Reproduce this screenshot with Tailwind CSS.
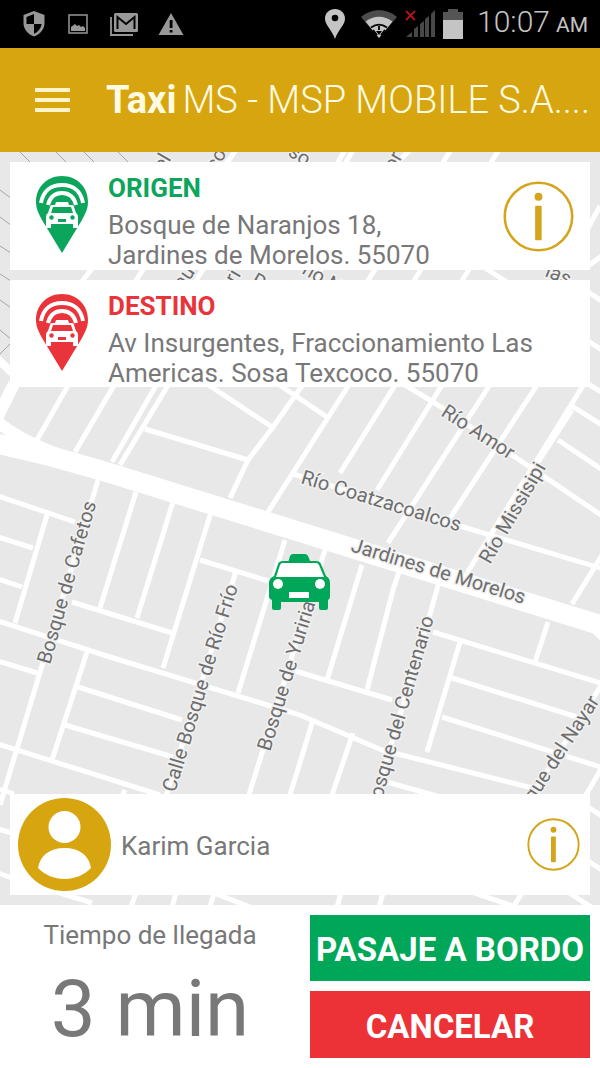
<!DOCTYPE html>
<html lang="es">
<head>
    <meta charset="UTF-8">
    <meta name="viewport" content="width=device-width, initial-scale=1.0">
    <title>Taxi MS | Viaje</title>

    <!-- Tailwind css -->
    <script src="https://cdn.jsdelivr.net/npm/@tailwindcss/browser@4"></script>
</head>
<body class="min-h-screen flex flex-col bg-white font-['Roboto',sans-serif] text-[#787878]">

    <!-- Shared icons -->
    <svg class="hidden">
        <symbol id="pin" viewBox="0 0 52 77">
            <path d="M26 0C11 0 0 11 0 26c0 7 3 12 6 18l20 33 20-33c3-6 6-11 6-18C52 11 41 0 26 0z" fill="currentColor"/>
            <path d="M5 27C7 15 15 9 26 9s19 6 21 18M12 29c2-8 7-12 14-12s12 4 14 12" fill="none" stroke="#fff" stroke-width="4"/>
            <path d="M20 26h12l1 3h3q2 0 2 2l2 6q2 1 2 4v11h-5v-4H15v4h-5V41q0-3 2-4l2-6q0-2 2-2h3z" fill="#fff"/>
            <path d="M17 31h18l2 6H15z" fill="currentColor"/>
            <circle cx="15.500" cy="41.500" r="2.200" fill="currentColor"/>
            <circle cx="36.500" cy="41.500" r="2.200" fill="currentColor"/>
            <path d="M22 43h8v3h-8z" fill="currentColor"/>
        </symbol>
        <symbol id="info" viewBox="0 0 72 72">
            <circle cx="36" cy="36" r="34.2" fill="none" stroke="currentColor" stroke-width="2.6"/>
            <circle cx="36" cy="16" r="4" fill="currentColor"/>
            <rect x="32.6" y="25" width="6.6" height="35" rx="1" fill="currentColor"/>
        </symbol>
    </svg>

    <!-- Status bar -->
    <div class="h-12 shrink-0 bg-black flex items-center justify-between pl-[22px] pr-3 text-[#c4c4c4]">
        <div class="flex items-center gap-5 text-[#989898]">
            <svg class="w-6 h-7" viewBox="0 0 24 28">
                <path d="M12 1l10.500 4v8c0 6-4 11-10.500 13.500C5.500 24 1.500 19 1.500 13V5z" fill="currentColor"/>
                <path d="M12 4v10H4.500V7zM12 14h7.500c-.5 4.500-3.500 8-7.500 9.800z" fill="#000"/>
            </svg>
            <svg class="w-6 h-6" viewBox="0 0 24 24">
                <rect x="3" y="3" width="18" height="18" fill="none" stroke="currentColor" stroke-width="1.500"/>
                <path d="M5 19v-4l4-3 2 2 2-1 2 2 2-1 2 2v3z" fill="currentColor"/>
            </svg>
            <svg class="w-7 h-6" viewBox="0 0 28 24">
                <path d="M1 5v18h22" fill="none" stroke="currentColor" stroke-width="1.800"/>
                <rect x="4" y="1" width="24" height="19" rx="1.500" fill="currentColor"/>
                <path d="M7.500 17V5l8.500 7 8.500-7v12" fill="none" stroke="#000" stroke-width="2"/>
            </svg>
            <svg class="w-[26px] h-6" viewBox="0 0 26 24">
                <path d="M13 1l12.500 22H.5z" fill="currentColor"/>
                <path d="M11.700 8h2.800v8h-2.800zM11.700 18h2.800v2.500h-2.800z" fill="#000"/>
            </svg>
        </div>
        <div class="flex items-center">
            <svg class="w-5 h-8" viewBox="0 0 20 32">
                <path d="M10 1C4.500 1 0 5 0 10.500 0 17 7 22 10 31c3-9 10-14 10-20.500C20 5 15.500 1 10 1z" fill="currentColor"/>
                <circle cx="10" cy="10" r="3.300" fill="#000"/>
            </svg>
            <svg class="w-9 h-7 ml-4" viewBox="0 0 36 28">
                <path d="M0 7c10-9 26-9 36 0L18 28z" fill="#4c4c4c"/>
                <path d="M4.500 11.500c8-6.500 19-6.500 27 0L18 28z" fill="currentColor"/>
                <path d="M10 17.500c5-3.500 11-3.500 16 0M18 16v4M12 20l4 5M24 20l-4 5" fill="none" stroke="#000" stroke-width="1.800"/>
                <path d="M15 21h6l-3 4z" fill="#000"/>
            </svg>
            <svg class="w-[30px] h-7 ml-2" viewBox="0 0 30 28">
                <path d="M1 27l6-5v5zM9 19l4-3v11H9zM15 14l4-3v16h-4zM20 9l4-3v21h-4zM26 4l4-4v27h-4z" fill="#484848"/>
                <path d="M1 1l9 9M10 1L1 10" stroke="#b01414" stroke-width="2"/>
            </svg>
            <svg class="w-5 h-[30px] ml-2" viewBox="0 0 20 30">
                <path d="M5 0h10v3h5v9H0V3h5z" fill="#555"/>
                <path d="M0 11h20v19H0z" fill="currentColor"/>
            </svg>
            <div class="ml-[14px] flex items-baseline gap-[6px] whitespace-nowrap">
                <span class="text-[30px] leading-8 font-light">10:07</span>
                <span class="text-[21px]">AM</span>
            </div>
        </div>
    </div>

    <!-- Header -->
    <header class="h-[104px] shrink-0 bg-[#d7a50f] flex items-center pl-[35px] pr-3">
        <button type="button" aria-label="Menú" class="shrink-0 w-[35px] flex flex-col gap-[6px]">
            <span class="h-1 bg-[#fff3c8]"></span>
            <span class="h-1 bg-[#fff3c8]"></span>
            <span class="h-1 bg-[#fff3c8]"></span>
        </button>
        <h1 class="ml-9 flex items-baseline gap-[6px] text-[38px] text-[#fffbe2] whitespace-nowrap">
            <b>Taxi</b>
            <span class="font-light">MS - MSP MOBILE S.A....</span>
        </h1>
    </header>

    <!-- Map -->
    <main class="relative flex-1 flex flex-col gap-[10px] p-[10px] overflow-hidden">
        <svg class="absolute inset-0 w-full h-full bg-[#e8e8e8]" viewBox="0 152 600 753" preserveAspectRatio="xMidYMid slice" role="img" aria-label="Mapa">
            <!-- Plot boundaries -->
            <g fill="none" stroke="#a5a5a5" stroke-width="1">
                <path d="M20 152l14 14M56 152l14 14M84 152l14 14M118 152l14 14M0 190l12 9M0 217l12 9M0 246l14 9M0 274l14 9M0 300l14 10M0 330l12 10M0 354l12-12"/>
            </g>
            <!-- Avenue -->
            <g fill="none" stroke="#fff">
                <path d="M-5 443L50 456L100 470L200 501L300 532L400 563L500 594L610 628" stroke-width="20"/>
                <path d="M14 384L-4 420Q15 438 60 455" stroke-width="12"/>
                <path d="M-2 359l14 14" stroke-width="8"/>
                <path d="M585 625L610 632V650z" fill="#fff"/>
            </g>
            <!-- Streets -->
            <g fill="none" stroke="#fff" stroke-width="5">
                <path d="M70 382L37 440M116 382L75 452M158 382L112 462M170 382L120 465M145 429L248 460M204 382L272 427M302 386L273 427L248 460L230 498M278 384L327 417"/>
                <path d="M350 383L268 512M293 474L460 526L610 571M397 382L340 473M444 382L377 490M491 383L388 543M539 382L450 518M400 382L435 403L610 521"/>
                <path d="M584 384L467 573M572 410L533 470M570 405L610 430M558 440L610 475M588 384L610 397M604 552L572 604"/>
                <path d="M362 565L327 680M399 572L393 590L367 690M439 582L427 625L370 815M325 550L248 798"/>
                <path d="M98 480L0 805M136 492L100 608M173 502L137 618M211 512L163 668M-2 496L75 522M47 515L15 623M-2 537L33 548M-2 579L22 587M200 560L275 583M236 571L165 800M285 540L238 693"/>
                <path d="M-2 621L110 657L300 715L382 750L540 790M72 602L172 633M-2 661L37 673M87 652L52 760M78 687L182 720M65 725L173 757M-2 744L160 795M295 671L392 700M313 720L290 795M353 733L332 795"/>
                <path d="M433 632L610 686M460 642L427 752M548 622L535 662M452 678L577 717M442 717L610 770M602 684L530 798M604 764L583 800M387 782L440 797M0 789l14 5M125 790l-3 6"/>
                <path d="M588 807l14 9M588 861l14 9M-2 829l14 4M-2 873l14 5M136 893l-5 14M176 893l-4 14M214 893l-4 14M214 893l36 14M341 893l-4 14M383 893l-4 14M474 893l45 15M522 893l-9 14M568 892l26 17M60 893l32 10"/>
                <path d="M236 150l-10 14M345 150l-8 14M353 150l-8 14M410 150l-14 14M451 150l-9 14M499 150l-9 14M94 266l-14 18M144 268l-9 14M204 268l-9 14M322 268l-9 14M376 268l-9 14M422 268l-9 14M470 268l-9 14M485 268l22 14M600 206l-12 22M588 266l14-10M588 292l14 9M588 341l14 9"/>
            </g>
            <!-- Street names -->
            <g class="text-[20px]" fill="#6e6e6e" stroke="#f1f1f1" stroke-width="3" paint-order="stroke">
                <text transform="translate(440 415) rotate(33)">Río Amor</text>
                <text transform="translate(300 483) rotate(17)">Río Coatzacoalcos</text>
                <text transform="translate(490 565) rotate(-60)">Río Missisipi</text>
                <text transform="translate(350 551) rotate(17)">Jardines de Morelos</text>
                <text transform="translate(50 665) rotate(-74)">Bosque de Cafetos</text>
                <text transform="translate(175 793) rotate(-73)">Calle Bosque de Río Frío</text>
                <text transform="translate(270 752) rotate(-73)">Bosque de Yuriria</text>
                <text transform="translate(434 618) rotate(-74)" text-anchor="end">Bosque del Centenario</text>
                <text transform="translate(600 701) rotate(-57)" text-anchor="end">Bosque del Nayar</text>
                <text transform="translate(164 172) rotate(-60)">el</text>
                <text transform="translate(216 172) rotate(-60)">co</text>
                <text transform="translate(287 155) rotate(32)">so</text>
                <text transform="translate(394 172) rotate(-60)">or</text>
                <text transform="translate(183 290) rotate(-55)">au</text>
                <text transform="translate(230 294) rotate(-60)">uri</text>
                <text transform="translate(250 284) rotate(30)">Ra</text>
                <text transform="translate(301 273) rotate(30)">no N</text>
                <text transform="translate(544 276) rotate(22)">las</text>
            </g>
            <!-- Taxi -->
            <g fill="#00a759">
                <path d="M288 563l2-7q1-2 3-2h12q2 0 3 2l3 7z"/>
                <path d="M283 561h33q4 0 5 3l5 12q4 2 4 7v14q0 2-2 3v8q0 2-2 2h-5q-2 0-2-2v-6h-38v6q0 2-2 2h-5q-2 0-2-2v-8q-3-1-3-3v-14q0-5 5-7l4-12q1-3 5-3z"/>
            </g>
            <path d="M282 563h34q2 0 3 2l5 12h-48l4-12q1-2 2-2z" fill="#fff"/>
            <circle cx="278" cy="584" r="5" fill="#fff"/>
            <circle cx="320" cy="584" r="5" fill="#fff"/>
            <path d="M289 592h20v6h-20z" fill="#fff"/>
        </svg>

        <section class="relative h-[108px] bg-white flex pl-[26px] pr-4">
            <svg class="w-[52px] h-[77px] mt-[14px] shrink-0 text-[#0ba55b]"><use href="#pin"/></svg>
            <div class="ml-5 mt-3 flex-1">
                <h2 class="text-[26px] leading-7 font-bold text-[#0ba55b]">ORIGEN</h2>
                <p class="mt-2 text-[26px] leading-[30px]">Bosque de Naranjos 18,<br>Jardines de Morelos. 55070</p>
            </div>
            <button type="button" aria-label="Información del viaje" class="self-center shrink-0 text-[#d3a51d]">
                <svg class="block w-[71px] h-[71px]"><use href="#info"/></svg>
            </button>
        </section>

        <section class="relative h-[107px] bg-white flex pl-[26px] pr-4">
            <svg class="w-[52px] h-[77px] mt-[14px] shrink-0 text-[#e8343a]"><use href="#pin"/></svg>
            <div class="ml-5 mt-3 flex-1">
                <h2 class="text-[26px] leading-7 font-bold text-[#e8343a]">DESTINO</h2>
                <p class="mt-2 text-[26px] leading-[30px]">Av Insurgentes, Fraccionamiento Las<br>Americas. Sosa Texcoco. 55070</p>
            </div>
        </section>

        <section class="relative mt-auto h-[101px] bg-white flex items-center pl-2 pr-[10px]">
            <svg class="w-[93px] h-[93px] shrink-0" viewBox="0 0 93 93">
                <circle cx="46.5" cy="46.5" r="46.5" fill="#d7a50f"/>
                <circle cx="46.500" cy="29" r="16" fill="#fff"/>
                <path d="M46.500 50C32 50 22 57 20 70c7 7 16 11 26.500 11S66 77 73 70C71 57 61 50 46.500 50z" fill="#fff"/>
            </svg>
            <p class="ml-[10px] pt-1 flex-1 text-[26px]">Karim Garcia</p>
            <button type="button" aria-label="Información del conductor" class="shrink-0 text-[#d3a51d]">
                <svg class="block w-[53px] h-[53px]"><use href="#info"/></svg>
            </button>
        </section>
    </main>

    <!-- Footer -->
    <footer class="shrink-0 bg-white grid grid-cols-2">
        <div class="text-center">
            <p class="mt-4 text-[26px] leading-7">Tiempo de llegada</p>
            <p class="mt-4 text-[80px] leading-[88px]">3 min</p>
        </div>
        <div class="p-[10px] flex flex-col gap-[10px] text-[33px] font-bold text-white whitespace-nowrap">
            <button type="button" class="h-[66px] pt-1 bg-[#00a759]">PASAJE A BORDO</button>
            <button type="button" class="h-[67px] pt-1 bg-[#ec3237]">CANCELAR</button>
        </div>
    </footer>
</body>
</html>
